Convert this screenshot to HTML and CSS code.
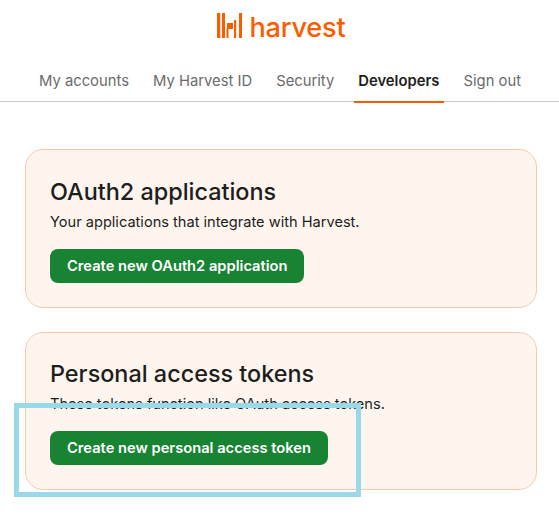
FILE: index.html
```html
<!DOCTYPE html>
<html lang="en">
<head>
  <meta charset="UTF-8">
  <meta name="viewport" content="width=device-width, initial-scale=1.0">
  <title>Developers - Harvest ID</title>
  <link rel="stylesheet" href="styles.css">
</head>
<body>
  <header class="site-header">
    <div class="logo">
      <svg class="logo-mark" width="25" height="25" viewBox="0 0 25 25" fill="#fa5d00">
        <rect x="0" y="0" width="3.3" height="25"/>
        <rect x="5" y="0" width="3" height="25"/>
        <rect x="9.5" y="16" width="2" height="9"/>
        <rect x="10" y="10" width="6" height="6"/>
        <rect x="17" y="7" width="2.2" height="18"/>
        <rect x="22" y="0" width="3" height="25"/>
      </svg>
      <span class="logo-text">harvest</span>
    </div>
    <nav class="tabs">
      <a href="#" class="tab">My accounts</a>
      <a href="#" class="tab">My Harvest ID</a>
      <a href="#" class="tab">Security</a>
      <a href="#" class="tab active">Developers</a>
      <a href="#" class="tab">Sign out</a>
    </nav>
  </header>

  <main class="content">
    <section class="card">
      <h2>OAuth2 applications</h2>
      <p>Your applications that integrate with Harvest.</p>
      <a href="#" class="btn">Create new OAuth2 application</a>
    </section>
    <section class="card">
      <h2>Personal access tokens</h2>
      <p>These tokens function like OAuth access tokens.</p>
      <a href="#" class="btn">Create new personal access token</a>
    </section>
  </main>

  <div class="highlight"></div>
</body>
</html>
```

FILE: styles.css
```css
html, body {
  height: 514px;
  overflow: hidden;
}
body {
  font-family: Inter, "Liberation Sans", sans-serif;
  margin: 0;
  padding: 0;
  background: #fff;
  color: #1d1e1c;
  position: relative;
}
.site-header {
  border-bottom: 1px solid #c8c8c8;
  height: 102px;
  box-sizing: border-box;
  display: flex;
  flex-direction: column;
  align-items: center;
}
.logo {
  display: flex;
  align-items: center;
  gap: 8px;
  height: 25px;
  margin-top: 13px;
  margin-left: 3px;
}
.logo-mark {
  display: block;
}
.logo-text {
  font-size: 27.1px;
  font-weight: 500;
  color: #fa5d00;
  letter-spacing: -0.2px;
  padding-top: 3px;
}
.tabs {
  display: flex;
  gap: 16px;
  margin-top: 30px;
  margin-left: 1px;
}
.tab {
  color: #6b6b6b;
  text-decoration: none;
  font-size: 14.8px;
  line-height: 20px;
  padding: 3px 4px 10px;
  border-bottom: 2px solid transparent;
}
.tab.active {
  color: #1d1e1c;
  font-weight: 600;
  border-bottom-color: #fa5d00;
}
.content {
  padding: 47px 22px 0 25px;
  display: flex;
  flex-direction: column;
  gap: 24px;
}
.card {
  background: #fff5ef;
  border: 1px solid #fdc9a9;
  border-radius: 18px;
  padding: 27.5px 24px 24px;
  box-sizing: border-box;
}
h2 {
  margin: 0;
  font-size: 23.4px;
  line-height: 28px;
  font-weight: 550;
}
p {
  margin: 6px 0 0;
  font-size: 14.6px;
  line-height: 20px;
}
.btn {
  display: inline-block;
  margin-top: 17px;
  padding: 0 17px;
  height: 34px;
  line-height: 34px;
  background: #188433;
  color: #fff;
  border-radius: 8px;
  font-size: 14.7px;
  font-weight: 600;
  text-decoration: none;
}
/* annotation box drawn over the screenshot */
.highlight {
  position: absolute;
  left: 14px;
  top: 403px;
  width: 347px;
  height: 94px;
  box-sizing: border-box;
  border: 5px solid #99d9ea;
}
```
